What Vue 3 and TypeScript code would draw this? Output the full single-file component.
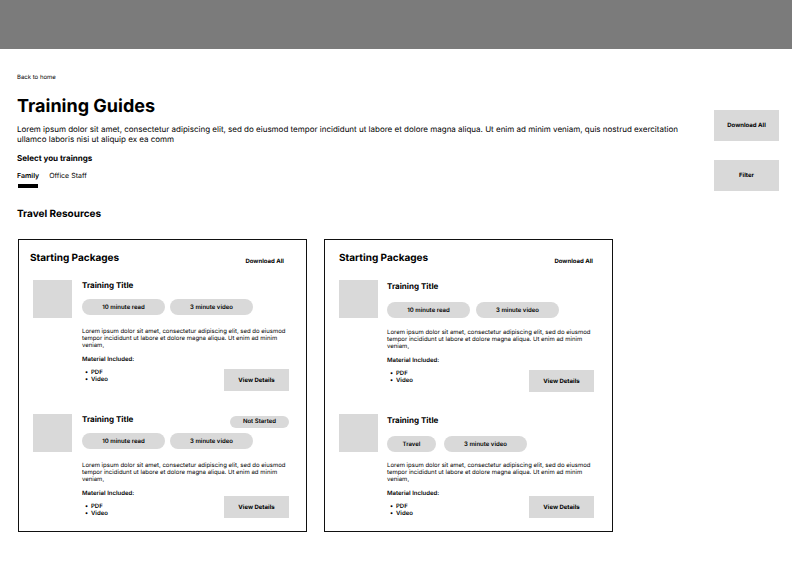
<script setup lang="ts">
import { ref } from 'vue'

interface Training {
  title: string
  tags: string[]
  status?: string
  materials: string[]
}

interface TrainingPackage {
  name: string
  trainings: Training[]
}

const tabs: string[] = ['Family', 'Office Staff']
const activeTab = ref<string>('Family')

const summary =
  'Lorem ipsum dolor sit amet, consectetur adipiscing elit, sed do eiusmod tempor incididunt ut labore et dolore magna aliqua. Ut enim ad minim veniam,'

const packages: TrainingPackage[] = [
  {
    name: 'Starting Packages',
    trainings: [
      { title: 'Training Title', tags: ['10 minute read', '3 minute video'], materials: ['PDF', 'Video'] },
      {
        title: 'Training Title',
        tags: ['10 minute read', '3 minute video'],
        status: 'Not Started',
        materials: ['PDF', 'Video'],
      },
    ],
  },
  {
    name: 'Starting Packages',
    trainings: [
      { title: 'Training Title', tags: ['10 minute read', '3 minute video'], materials: ['PDF', 'Video'] },
      { title: 'Training Title', tags: ['Travel', '3 minute video'], materials: ['PDF', 'Video'] },
    ],
  },
]
</script>

<template>
  <div class="page">
    <header class="banner"></header>
    <main class="content">
      <div class="top">
        <div class="intro">
          <a class="back" href="#">Back to home</a>
          <h1>Training Guides</h1>
          <p class="lead">
            Lorem ipsum dolor sit amet, consectetur adipiscing elit, sed do eiusmod tempor incididunt ut labore et
            dolore magna aliqua. Ut enim ad minim veniam, quis nostrud exercitation ullamco laboris nisi ut aliquip ex
            ea comm
          </p>
          <h2 class="select-title">Select you trainngs</h2>
          <nav class="tabs">
            <button
              v-for="tab in tabs"
              :key="tab"
              type="button"
              class="tab"
              :class="{ active: tab === activeTab }"
              @click="activeTab = tab"
            >
              {{ tab }}
            </button>
          </nav>
        </div>
        <div class="actions">
          <button type="button" class="block-button tall">Download All</button>
          <button type="button" class="block-button tall">Filter</button>
        </div>
      </div>

      <h2 class="section-title">Travel Resources</h2>
      <div class="packages">
        <section v-for="(pack, p) in packages" :key="p" class="package">
          <div class="package-head">
            <h3>{{ pack.name }}</h3>
            <button type="button" class="text-button">Download All</button>
          </div>
          <article v-for="(training, t) in pack.trainings" :key="t" class="training">
            <div class="thumb"></div>
            <div class="body">
              <div class="title-row">
                <h4>{{ training.title }}</h4>
                <span v-if="training.status" class="status">{{ training.status }}</span>
              </div>
              <div class="tags">
                <span v-for="tag in training.tags" :key="tag" class="tag" :class="{ short: tag.length < 8 }">{{
                  tag
                }}</span>
              </div>
              <p class="summary">{{ summary }}</p>
              <div class="details">
                <div class="materials">
                  <h5>Material Included:</h5>
                  <ul>
                    <li v-for="item in training.materials" :key="item">{{ item }}</li>
                  </ul>
                </div>
                <button type="button" class="block-button">View Details</button>
              </div>
            </div>
          </article>
        </section>
      </div>
    </main>
  </div>
</template>

<style>
body {
  margin: 0;
  background: #fff;
}
</style>

<style scoped>
.page {
  font-family: Inter, 'Liberation Sans', sans-serif;
  font-size: 6px;
  line-height: 7px;
  color: #000;
  text-rendering: geometricPrecision;
}

h1,
h2,
h3,
h4,
h5,
p,
ul {
  margin: 0;
  padding: 0;
}

button {
  border: 0;
  padding: 0;
  background: none;
  color: inherit;
  font: inherit;
  text-rendering: inherit;
  cursor: pointer;
}

.banner {
  height: 49px;
  background: #7b7b7b;
}

.content {
  padding: 25px 13px 30px 17px;
}

.top {
  display: flex;
  gap: 24px;
}

.intro {
  flex: 1;
}

.back {
  display: block;
  color: #000;
  text-decoration: none;
}

h1 {
  margin-top: 15px;
  font-size: 18px;
  line-height: 22px;
  font-weight: 700;
}

.lead {
  margin-top: 6px;
  font-size: 8px;
  line-height: 10px;
}

.select-title {
  margin-top: 9px;
  font-size: 8px;
  line-height: 10px;
  font-weight: 700;
}

.tabs {
  display: flex;
  gap: 10px;
  margin-top: 8px;
}

.tab {
  padding-bottom: 7px;
  font-size: 7px;
  line-height: 10px;
}

.tab.active {
  font-weight: 600;
  background: linear-gradient(#000, #000) center bottom / 20px 4px no-repeat;
}

.actions {
  display: flex;
  flex-direction: column;
  gap: 19px;
  padding-top: 36px;
}

.block-button {
  flex: none;
  width: 65px;
  height: 22px;
  background: #d9d9d9;
  font-weight: 700;
}

.tall {
  height: 31px;
}

.section-title {
  margin-top: 17px;
  font-size: 10px;
  line-height: 12px;
  font-weight: 700;
}

.packages {
  display: grid;
  grid-template-columns: 1fr 1fr;
  gap: 17px;
  max-width: 595px;
  margin: 19px 0 0 1px;
}

.package {
  border: 1px solid #111;
  padding: 11px 17px 13px 14px;
}

.package + .package {
  padding-right: 18px;
}

.package-head {
  display: flex;
  align-items: flex-end;
  justify-content: space-between;
  padding-right: 5px;
  margin-left: -3px;
}

.package + .package .package-head {
  padding-right: 1px;
  margin-left: 0;
}

h3 {
  font-size: 10px;
  line-height: 14px;
  font-weight: 700;
}

.text-button {
  font-weight: 700;
}

.training {
  display: flex;
  gap: 10px;
  margin-top: 15px;
}

.package + .package .training {
  gap: 9px;
}

.training + .training {
  margin-top: 23px;
}

.package + .package .training + .training {
  margin-top: 22px;
}

.thumb {
  flex: none;
  width: 39px;
  height: 38px;
  background: #d9d9d9;
}

.body {
  flex: 1;
  min-width: 0;
}

.title-row {
  display: flex;
  align-items: flex-end;
  justify-content: space-between;
  height: 11px;
}

.package + .package .title-row {
  padding-top: 1px;
}

h4 {
  font-size: 8px;
  line-height: 12px;
  font-weight: 700;
}

.status {
  width: 59px;
  height: 12px;
  margin-bottom: -3px;
  border-radius: 6px;
  background: #d9d9d9;
  font-weight: 600;
  line-height: 12px;
  text-align: center;
}

.tags {
  display: flex;
  gap: 5px;
  margin-top: 8px;
}

.package + .package .tags {
  gap: 6px;
  margin-top: 10px;
}

.package + .package .training + .training .tags {
  gap: 8px;
}

.tag {
  width: 83px;
  padding-top: 1px;
  border-radius: 8px;
  background: #d9d9d9;
  font-weight: 600;
  line-height: 15px;
  text-align: center;
}

.tag.short {
  width: 49px;
}

.summary {
  margin-top: 13px;
}

.package + .package .summary {
  margin-top: 11px;
}

.package + .package .training + .training .summary {
  margin-top: 10px;
}

.details {
  display: flex;
  align-items: flex-end;
  justify-content: space-between;
  margin-top: 7px;
}

.materials {
  padding-bottom: 8px;
}

.training + .training .materials {
  padding-bottom: 1px;
}

h5 {
  font-size: 6px;
  line-height: 7px;
  font-weight: 600;
}

ul {
  margin-top: 6px;
  padding-left: 3px;
  font-weight: 600;
  list-style: none;
}

li {
  display: flex;
}

li::before {
  content: '•';
  width: 6px;
}
</style>
